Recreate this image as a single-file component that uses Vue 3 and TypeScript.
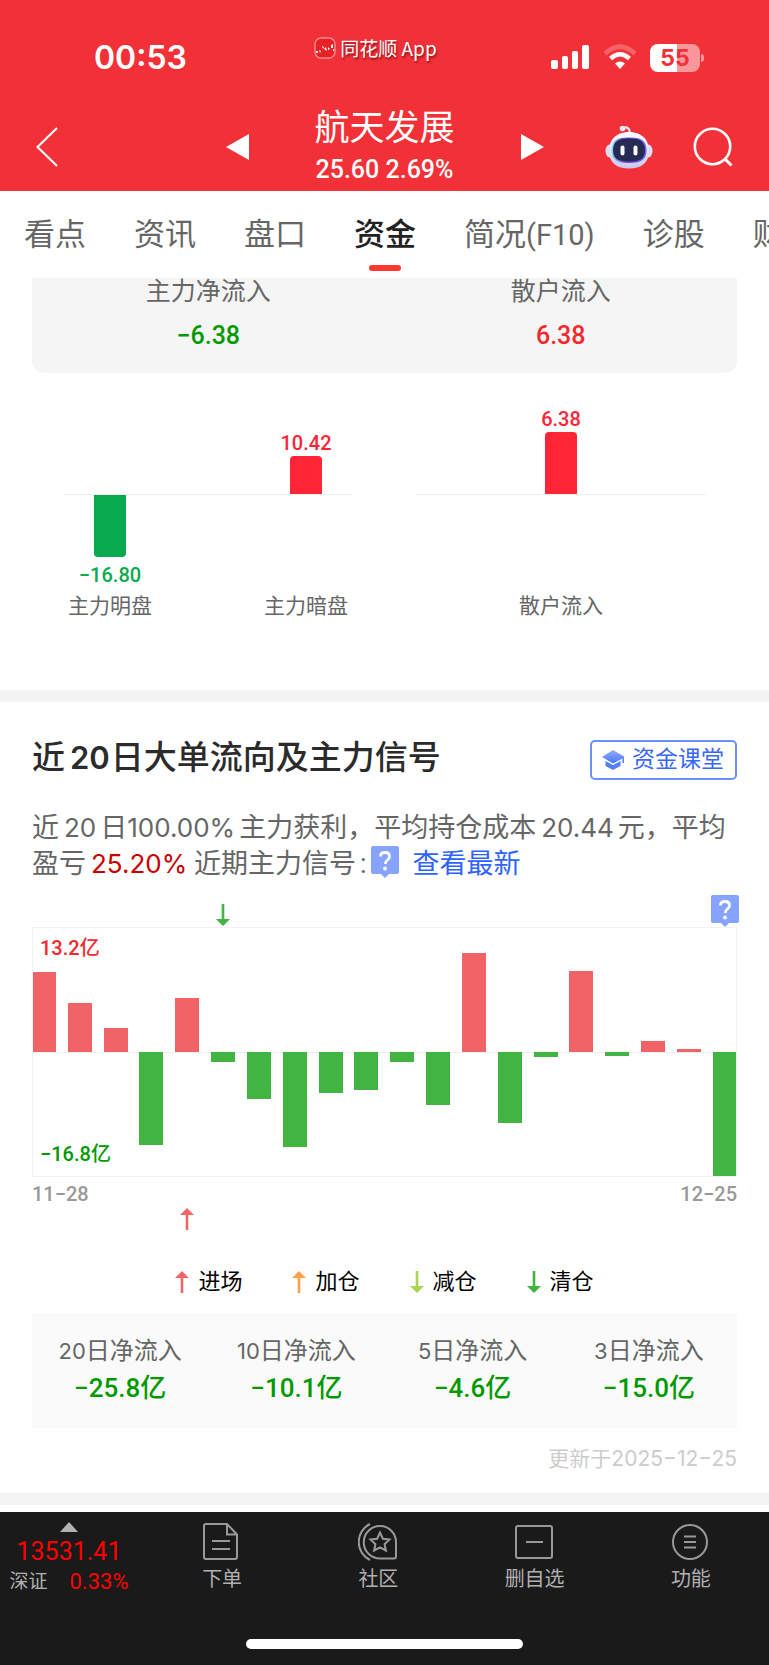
<script setup lang="ts">
interface Tab { name: string; code?: string }
interface Group { name: string; value: string; tone: 'up' | 'down' }
interface Order { name: string; value: string; height: number; tone: 'up' | 'down' }

const tabs: Tab[] = [
  { name: '看点' },
  { name: '资讯' },
  { name: '盘口' },
  { name: '资金' },
  { name: '简况', code: '(F10)' },
  { name: '诊股' },
  { name: '财务' },
]
const activeTab = '资金'

const totals: Group[] = [
  { name: '主力净流入', value: '−6.38', tone: 'down' },
  { name: '散户流入', value: '6.38', tone: 'up' },
]

const orderGroups: Order[][] = [
  [
    { name: '主力明盘', value: '−16.80', height: 62, tone: 'down' },
    { name: '主力暗盘', value: '10.42', height: 38, tone: 'up' },
  ],
  [{ name: '散户流入', value: '6.38', height: 62, tone: 'up' }],
]

const flow: number[] = [80, 49, 24, -93, 54, -10, -47, -95, -41, -38, -10, -53, 99, -71, -5, 81, -4, 11, 3, -124]

const legend = [
  { name: '进场', up: true, color: '#f06565' },
  { name: '加仓', up: true, color: '#ff9f4a' },
  { name: '减仓', up: false, color: '#acd44e' },
  { name: '清仓', up: false, color: '#41b441' },
]

const periods = [
  { days: '20', value: '−25.8' },
  { days: '10', value: '−10.1' },
  { days: '5', value: '−4.6' },
  { days: '3', value: '−15.0' },
]
</script>

<template>
  <div class="app">
    <header class="header">
      <div class="status">
        <div class="time">00:53</div>
        <div class="brand">
          <svg width="22" height="22" viewBox="0 0 22 22">
            <rect x="1" y="1" width="20" height="20" rx="6" fill="#e92026" stroke="#ff8d8f" stroke-width="1.4" />
            <path d="M2 14h2v2H2zM5 13l2 1-1 2zM8 9l2 1-1 2zM10 12l2-2 1 4zM14 10l2 2-2 1zM17 8l2-1v4h-2zM19 12h1v2h-1z" fill="#fff" />
          </svg>
          <span>同花顺 App</span>
        </div>
        <div class="signals">
          <svg width="39" height="26" viewBox="0 0 39 26" fill="#fff">
            <rect x="0" y="16" width="7" height="9" rx="2" />
            <rect x="11" y="12" width="6" height="13" rx="2" />
            <rect x="21" y="7" width="6" height="18" rx="2" />
            <rect x="31" y="1" width="7" height="24" rx="2" />
          </svg>
          <svg width="34" height="26" viewBox="0 0 34 26" fill="none">
            <path d="M2 9.500Q17-4 32 9.500" stroke="#fff" stroke-opacity=".25" stroke-width="5" />
            <path d="M7.500 14.500Q17 6 26.500 14.500" stroke="#fff" stroke-width="4.500" />
            <path d="M12 19.500Q17 15.500 22 19.500L17 25z" fill="#fff" />
          </svg>
          <div class="battery"><span class="level">55</span><i class="cap"></i></div>
        </div>
      </div>
      <div class="bar">
        <button class="icon-btn" aria-label="返回">
          <svg width="24" height="40" viewBox="0 0 24 40" fill="none" stroke="#fff" stroke-width="2.200"><path d="M21 1L1.500 20L21 39" /></svg>
        </button>
        <div class="stock">
          <button class="icon-btn" aria-label="上一只">
            <svg width="24" height="26" viewBox="0 0 24 26"><path d="M24 0V26L1 13z" fill="#fff" /></svg>
          </button>
          <div class="quote">
            <h1>航天发展</h1>
            <p>25.60 2.69%</p>
          </div>
          <button class="icon-btn" aria-label="下一只">
            <svg width="24" height="26" viewBox="0 0 24 26"><path d="M1 0V26L24 13z" fill="#fff" /></svg>
          </button>
        </div>
        <div class="tools">
          <button class="icon-btn" aria-label="智能助手">
            <svg width="48" height="44" viewBox="0 0 48 44">
              <defs>
                <linearGradient id="shell" x1="0" y1="0" x2="0" y2="1"><stop offset="0" stop-color="#fff" /><stop offset="1" stop-color="#c9c9ee" /></linearGradient>
                <linearGradient id="rim" x1="0" y1="0" x2="1" y2="0"><stop offset="0" stop-color="#7fe0f0" /><stop offset=".4" stop-color="#7a3fe0" /><stop offset="1" stop-color="#6b62f0" /></linearGradient>
              </defs>
              <path d="M18 3C22 1.500 25 3 24.500 8" fill="none" stroke="#eceaff" stroke-width="2.200" />
              <circle cx="17.500" cy="3.500" r="2.800" fill="#eceaff" />
              <ellipse cx="4.500" cy="26" rx="4" ry="6.500" fill="#dcdcf6" />
              <ellipse cx="43.500" cy="26" rx="4" ry="6.500" fill="#dcdcf6" />
              <path d="M24 7C38 7 44 16 44 26C44 38 36 43.500 24 43.500S4 38 4 26C4 16 10 7 24 7z" fill="url(#shell)" />
              <path d="M24 12.500C36 12.500 41 15 41.500 25C41.500 35 36 38 24 38S6.500 35 6.500 25C7 15 12 12.500 24 12.500z" fill="url(#rim)" />
              <path d="M24 13.500C35 13.500 39.500 16 40 25C40 34 35 36.500 24 36.500S8 34 8 25C8.500 16 13 13.500 24 13.500z" fill="#252b55" />
              <rect x="15.500" y="20.500" width="4" height="10" rx="2" fill="#fff" />
              <rect x="28.500" y="20.500" width="4" height="10" rx="2" fill="#fff" />
            </svg>
          </button>
          <button class="icon-btn" aria-label="搜索">
            <svg width="40" height="40" viewBox="0 0 40 40" fill="none" stroke="#fff" stroke-width="2.600"><circle cx="19.500" cy="19.500" r="17.700" /><path d="M32 32L38.500 38.500" stroke-width="3" /></svg>
          </button>
        </div>
      </div>
    </header>

    <nav class="tabs">
      <a v-for="tab in tabs" :key="tab.name" href="#" class="tab" :class="{ active: tab.name === activeTab }">{{ tab.name }}<span v-if="tab.code" class="code">{{ tab.code }}</span></a>
    </nav>

    <main>
      <section class="distribution">
        <div class="totals">
          <div v-for="t in totals" :key="t.name" class="total">
            <span class="total-name">{{ t.name }}</span>
            <strong :class="t.tone">{{ t.value }}</strong>
          </div>
        </div>
        <div class="orders">
          <div v-for="(group, g) in orderGroups" :key="g" class="group">
            <div v-for="o in group" :key="o.name" class="order">
              <div class="upper">
                <template v-if="o.tone === 'up'">
                  <span>{{ o.value }}</span>
                  <i class="block" :style="{ height: o.height + 'px' }"></i>
                </template>
              </div>
              <div class="lower">
                <template v-if="o.tone === 'down'">
                  <i class="block" :style="{ height: o.height + 'px' }"></i>
                  <span>{{ o.value }}</span>
                </template>
              </div>
              <span class="order-name">{{ o.name }}</span>
            </div>
          </div>
        </div>
      </section>

      <section class="signal">
        <div class="heading">
          <h2>近<b>20</b>日大单流向及主力信号</h2>
          <button class="lesson">
            <svg width="23" height="22" viewBox="0 0 23 22">
              <defs><linearGradient id="hat" x1="0" y1="0" x2="0" y2="1"><stop offset="0" stop-color="#93aeff" /><stop offset="1" stop-color="#4775fb" /></linearGradient></defs>
              <path d="M11 1L22 7.500V14H20.500V9.500L11 14.500L0 8z" fill="url(#hat)" />
              <path d="M3.500 12L11 16L18.500 12V17L11 21L3.500 17z" fill="#5580fb" />
            </svg>
            资金课堂
          </button>
        </div>
        <p class="summary">近<span class="num gap-l gap-s">20</span>日<span class="num gap-s">100.00%</span>主力获利，平均持仓成本<span class="num gap-l gap-s">20.44</span>元，平均盈亏<span class="num gap-l gain">25.20%</span> 近期主力信号<span class="colon">:</span><button class="tip" aria-label="信号说明"><svg width="28" height="32" viewBox="0 0 28 32"><path d="M2 0H26Q28 0 28 2V26Q28 28 26 28H18L14 32L10 28H2Q0 28 0 26V2Q0 0 2 0z" fill="#86a3ff" /><path d="M9.500 10.500Q9.500 6.500 14 6.500T18.500 10.500Q18.500 12.500 16.500 14T14.200 18" fill="none" stroke="#fff" stroke-width="2.800" /><circle cx="14" cy="22.500" r="1.900" fill="#fff" /></svg></button><a href="#" class="latest">查看最新</a></p>

        <div class="chart">
          <div class="marks">
            <div v-for="(v, i) in flow" :key="i" class="slot">
              <svg v-if="i === 5" class="sell" width="14" height="22" viewBox="0 0 14 22"><path d="M5.700 0H8.300V15H14L7 22L0 15H5.700z" fill="#41b441" /></svg>
              <button v-if="i === 19" class="tip" aria-label="图表说明">
                <svg width="28" height="32" viewBox="0 0 28 32"><path d="M2 0H26Q28 0 28 2V26Q28 28 26 28H18L14 32L10 28H2Q0 28 0 26V2Q0 0 2 0z" fill="#86a3ff" /><path d="M9.500 10.500Q9.500 6.500 14 6.500T18.500 10.500Q18.500 12.500 16.500 14T14.200 18" fill="none" stroke="#fff" stroke-width="2.800" /><circle cx="14" cy="22.500" r="1.900" fill="#fff" /></svg>
              </button>
            </div>
          </div>
          <div class="plot">
            <div v-for="(v, i) in flow" :key="i" class="column">
              <div class="half top"><i v-if="v > 0" class="rise" :style="{ height: v + 'px' }"></i></div>
              <div class="half"><i v-if="v < 0" class="fall" :style="{ height: -v + 'px' }"></i></div>
            </div>
            <span class="scale max">13.2亿</span>
            <span class="scale min">−16.8亿</span>
          </div>
          <div class="dates"><span>11−28</span><span>12−25</span></div>
          <div class="marks below">
            <div v-for="(v, i) in flow" :key="i" class="slot">
              <svg v-if="i === 4" width="14" height="22" viewBox="0 0 14 22"><path d="M7 0L14 7H8.300V22H5.700V7H0z" fill="#f06565" /></svg>
            </div>
          </div>
        </div>

        <ul class="legend">
          <li v-for="l in legend" :key="l.name">
            <svg width="14" height="22" viewBox="0 0 14 22"><path :d="l.up ? 'M7 0L14 7H8.300V22H5.700V7H0z' : 'M5.700 0H8.300V15H14L7 22L0 15H5.700z'" :fill="l.color" /></svg>
            {{ l.name }}
          </li>
        </ul>

        <div class="periods">
          <div v-for="p in periods" :key="p.days" class="period">
            <span class="period-name"><span class="num">{{ p.days }}</span>日净流入</span>
            <strong>{{ p.value }}亿</strong>
          </div>
        </div>
        <p class="updated">更新于<span class="num">2025−12−25</span></p>
      </section>
    </main>

    <footer class="dock">
      <div class="dock-row">
        <button class="index">
          <svg width="18" height="10" viewBox="0 0 18 10"><path d="M9 0L18 10H0z" fill="#b3b3b3" /></svg>
          <strong>13531.41</strong>
          <span class="index-line"><span>深证</span><em>0.33%</em></span>
        </button>
        <button class="action">
          <svg width="40" height="40" viewBox="0 0 40 40"><path d="M4 2H25L35 12.500V35Q35 37 33 37H4Q2 37 2 35V4Q2 2 4 2zM25 2V12.500H35M10 19H28M10 27H28" /></svg>
          下单
        </button>
        <button class="action">
          <svg width="40" height="40" viewBox="0 0 40 40"><path d="M22 4A15.800 15.800 0 0 0 22 36.500H36Q38 36.500 38 34.500V20A16 16 0 0 0 22 4zM12 2A20 20 0 0 0 12 38M22 10.500L24.900 16.700L31.500 17.400L26.600 22L27.900 28.500L22 25.300L16.100 28.500L17.400 22L12.500 17.400L19.100 16.700z" /></svg>
          社区
        </button>
        <button class="action">
          <svg width="40" height="40" viewBox="0 0 40 40"><path d="M3 4H35Q37 4 37 6V34Q37 36 35 36H3Q1 36 1 34V6Q1 4 3 4zM11 20H28" /></svg>
          删自选
        </button>
        <button class="action">
          <svg width="40" height="40" viewBox="0 0 40 40"><circle cx="19" cy="20" r="17" /><path d="M13 14.500H25M13 20H25M13 25.500H25" /></svg>
          功能
        </button>
      </div>
      <div class="home"></div>
    </footer>
  </div>
</template>

<style>
body { margin: 0; background: #fff; }
</style>

<style scoped>
* { box-sizing: border-box; }
.app {
  font-family: Roboto, "Noto Sans CJK SC", sans-serif;
  color: #666;
  overflow: hidden;
}
h1, h2, p, ul { margin: 0; padding: 0; font-weight: 400; }
button { border: 0; padding: 0; background: none; font: inherit; color: inherit; }
a { text-decoration: none; color: inherit; }
svg, i { display: block; }
svg { flex: none; }

.header { background: #f23038; color: #fff; height: 191px; padding-top: 36px; }
.status { display: grid; grid-template-columns: 1fr auto 1fr; height: 44px; }
.time { padding: 2px 0 0 94px; font: 600 32px/40px Inter, sans-serif; }
.brand {
  display: flex; gap: 4px; height: 24px; margin-right: 18px; align-items: center;
  font: 19px/24px "Noto Sans CJK SC", sans-serif;
  text-shadow: 1px 2px 2px rgba(80, 0, 0, .6);
}
.signals { display: flex; justify-content: flex-end; gap: 13px; padding: 8px 69px 0 0; }
.battery {
  position: relative; width: 50px; height: 28px; border-radius: 8px;
  background: linear-gradient(90deg, #fff 55%, #f9979b 55%);
}
.level {
  display: block; text-align: center; font: 700 23px/28px Inter, sans-serif; color: #f23038;
}
.cap { position: absolute; right: -4px; top: 10px; width: 3px; height: 8px; border-radius: 0 3px 3px 0; background: #f9979b; }
.bar { display: grid; grid-template-columns: 1fr auto 1fr; align-items: center; padding: 26px 36px 0; }
.stock { display: flex; align-items: center; gap: 65px; }
.quote { text-align: center; }
.quote h1 { font-size: 35px; line-height: 46px; }
.quote p { font-size: 25px; line-height: 36px; font-weight: 500; white-space: nowrap; }
.tools { display: flex; justify-content: flex-end; align-items: center; gap: 40px; }

.tabs { display: flex; gap: 48px; height: 87px; padding: 0 0 0 24px; overflow: hidden; }
.tab {
  position: relative; flex: none; font-size: 31px; line-height: 87px; color: #666; white-space: nowrap;
}
.code { font-size: 29px; }
.active { color: #222; font-weight: 500; }
.active::after {
  content: ""; position: absolute; left: 50%; bottom: 7px; width: 32px; height: 6px;
  margin-left: -16px; border-radius: 3px; background: #ff3830;
}

.totals { display: flex; margin: 0 32px; height: 95px; border-radius: 0 0 12px 12px; background: #f5f5f5; }
.total { flex: 1; display: flex; flex-direction: column; align-items: center; }
.total-name { font-size: 25px; line-height: 28px; }
.total strong { margin-top: 12px; font-size: 25px; line-height: 36px; font-weight: 500; }
.up { color: #f4292e; }
.down { color: #009a00; }

.orders { display: grid; grid-template-columns: 1fr 1fr; gap: 63px; margin: 0 63px; }
.group {
  display: flex; justify-content: space-between;
  background: linear-gradient(#eee, #eee) 0 121px / 100% 1px no-repeat;
}
.group:last-child { justify-content: center; }
.order { width: 94px; display: flex; flex-direction: column; align-items: center; font-size: 20px; font-weight: 500; }
.upper, .lower { align-self: stretch; display: flex; flex-direction: column; align-items: center; }
.upper { height: 122px; justify-content: flex-end; border-bottom: 1px solid #eee; gap: 1px; color: #ff2436; line-height: 24px; }
.lower { height: 96px; gap: 6px; color: #08aa4d; line-height: 24px; }
.block { width: 32px; background: currentColor; }
.upper .block { border-radius: 4px 4px 0 0; }
.lower .block { border-radius: 0 0 4px 4px; }
.order-name { font-size: 21px; line-height: 30px; font-weight: 400; }
.distribution { padding-bottom: 69px; border-bottom: 12px solid #f4f4f4; }

.signal { padding: 38px 32px 18px; border-bottom: 12px solid #f4f4f4; }
.heading { display: flex; justify-content: space-between; align-items: flex-start; }
.heading h2 { font-size: 33px; line-height: 36px; font-weight: 500; color: #2b2b2b; }
.heading b { margin: 0 1px 0 5px; font: 600 31px/36px Inter, sans-serif; }
.lesson {
  display: flex; align-items: center; gap: 7px; height: 40px; padding: 0 11px 0 10px;
  border: 2px solid #6c90ff; border-radius: 5px; color: #3866f8; font-size: 23px; line-height: 36px;
}
.summary { margin-top: 30px; font-size: 27px; line-height: 36px; }
.num { font-family: Inter, sans-serif; font-size: 26px; }
.gap-l { margin-left: 5px; }
.gap-s { margin-right: 4px; }
.gain { color: #c80000; }
.colon { padding: 0 4px; }
.tip { display: inline-block; vertical-align: top; }
.latest { margin-left: 14px; color: #2f63ff; }

.chart { margin-top: 13px; }
.marks { display: flex; justify-content: space-between; height: 32px; align-items: flex-end; }
.slot { width: 24px; display: flex; justify-content: center; }
.slot .tip { margin: 0 -2px; }
.sell { margin-bottom: 1px; }
.plot {
  position: relative; display: flex; justify-content: space-between; height: 250px;
  outline: 1px solid #f2f2f2; outline-offset: -1px;
  background: linear-gradient(#eee, #eee) 0 125px / 100% 1px no-repeat;
}
.column { width: 24px; }
.half { height: 125px; display: flex; flex-direction: column; }
.top { justify-content: flex-end; }
.rise { background: #f06467; }
.fall { background: #41b441; }
.scale { position: absolute; left: 8px; font-size: 20px; line-height: 28px; font-weight: 500; }
.max { top: 7px; color: #f4292e; }
.min { bottom: 9px; color: #009a00; }
.dates { display: flex; justify-content: space-between; font-size: 20px; line-height: 34px; font-weight: 500; color: #999; }
.below { height: 19px; }

.legend { display: flex; justify-content: center; gap: 50px; list-style: none; margin-top: 36px; font-size: 22px; line-height: 32px; color: #000; }
.legend li { display: flex; align-items: center; gap: 9px; }

.periods { display: flex; margin-top: 15px; padding: 20px 0; background: #fafafa; }
.period { flex: 1; display: flex; flex-direction: column; align-items: center; }
.period-name { font-size: 24px; line-height: 36px; }
.period-name .num { font-size: 22px; }
.period strong { font-size: 26px; line-height: 39px; font-weight: 500; color: #009a00; }
.updated { margin-top: 15px; text-align: right; font-size: 21px; line-height: 32px; color: #ccc; }
.updated .num { font-size: 21px; }

.dock { margin-top: 7px; background: #1a1a1a; color: #b0b0b0; height: 153px; display: flex; flex-direction: column; justify-content: space-between; }
.dock-row { display: flex; }
.index { width: 144px; padding: 10px 6px 0 0; display: flex; flex-direction: column; align-items: center; color: #b0b0b0; }
.index svg { margin-bottom: 3px; }
.index strong { font-size: 25px; line-height: 34px; font-weight: 400; color: #f00; }
.index-line { display: flex; gap: 22px; font-size: 19px; line-height: 26px; }
.index-line em { font-style: normal; font-size: 22px; color: #f00; }
.action { flex: 1; padding-top: 10px; display: flex; flex-direction: column; align-items: center; font-size: 20px; line-height: 34px; }
.action svg { fill: none; stroke: #999; stroke-width: 2; }
.home { width: 36%; height: 10px; margin: 0 auto 16px; border-radius: 5px; background: #fff; }
</style>
